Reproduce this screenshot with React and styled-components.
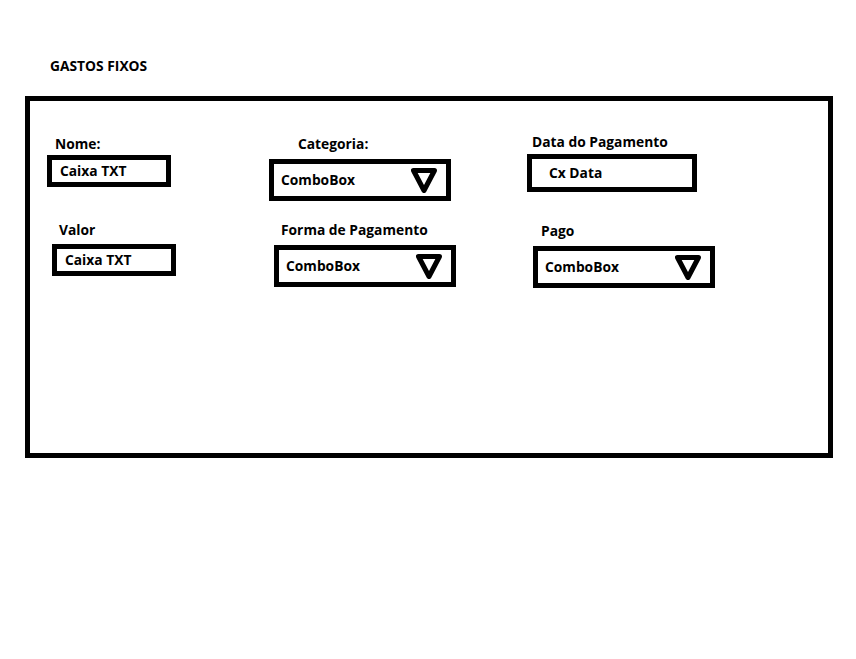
import React from 'react'
import styled, { createGlobalStyle } from 'styled-components'

const Global = createGlobalStyle`
    body {
        margin: 0;
        background: white;
        font-family: "Open Sans", "DejaVu Sans", sans-serif;
        font-weight: 700;
        font-size: 13.8px;
        color: black;
    }
`;

const Page = styled.div`
    padding: 58px 0 0 25px;
    width: 856px;
    height: 659px;
    box-sizing: border-box;
`;

const Title = styled.div`
    margin-left: 25px;
    line-height: 16px;
    height: 16px;
`;

const Frame = styled.div`
    margin-top: 22px;
    width: 808px;
    height: 362px;
    box-sizing: border-box;
    border: 5px solid black;
    padding-left: 17px;
    display: grid;
    grid-template-columns: 222px 258px 1fr;
    grid-template-rows: 88px auto;
    align-items: start;
`;

const Field = styled.div`
    display: flex;
    flex-direction: column;
    align-items: flex-start;
    margin-top: ${p => p.$y}px;
    margin-left: ${p => p.$x || 0}px;
`;

const Label = styled.div`
    line-height: 16px;
    margin-left: ${p => p.$lx}px;
    margin-bottom: ${p => p.$gap}px;
`;

const Box = styled.div`
    display: flex;
    align-items: center;
    justify-content: space-between;
    box-sizing: border-box;
    width: ${p => p.$w}px;
    height: ${p => p.$h}px;
    border: 5px solid black;
    padding: 0 9px 0 ${p => p.$pad}px;
    line-height: 16px;
`;

const Arrow = () => (
    <svg width="26" height="25" viewBox="0 0 26 25">
        <polygon points="2.5,2.5 23.5,2.5 13,22.5" fill="white" stroke="black" strokeWidth="5" strokeLinejoin="round" />
    </svg>
);

function TextField({ label, value, x, y, lx, gap, pad, w = 124, h = 32 }) {
    return (
        <Field $x={x} $y={y}>
            <Label $lx={lx} $gap={gap}>{label}</Label>
            <Box $w={w} $h={h} $pad={pad}>{value}</Box>
        </Field>
    )
}

function ComboField({ label, x, y, lx, gap }) {
    return (
        <Field $x={x} $y={y}>
            <Label $lx={lx} $gap={gap}>{label}</Label>
            <Box $w={182} $h={42} $pad={7}>
                ComboBox
                <Arrow />
            </Box>
        </Field>
    )
}

export default function App() {
    return (
        <Page>
            <Global />
            <Title>GASTOS FIXOS</Title>
            <Frame>
                <TextField label="Nome:" value="Caixa TXT" y={35} lx={8} gap={3} pad={8} />
                <ComboField label="Categoria:" y={35} lx={29} gap={7} />
                <TextField label="Data do Pagamento" value="Cx Data" y={33} lx={5} gap={4} pad={17} w={170} h={38} />

                <TextField label="Valor" value="Caixa TXT" x={5} y={33} lx={7} gap={6} pad={8} />
                <ComboField label="Forma de Pagamento" x={5} y={33} lx={7} gap={7} />
                <ComboField label="Pago" x={6} y={34} lx={8} gap={7} />
            </Frame>
        </Page>
    )
}
